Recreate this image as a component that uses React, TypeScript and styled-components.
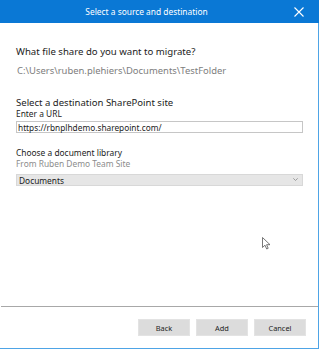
import React from "react";
import styled, { createGlobalStyle } from "styled-components";

const Global = createGlobalStyle`
  html, body { margin: 0; padding: 0; background: #ffffff; }
  body { font-family: "Noto Sans", "Open Sans", sans-serif; }
  * { box-sizing: border-box; }
`;

const Window = styled.div`
  width: 319px;
  height: 349px;
  display: flex;
  flex-direction: column;
  background: #ffffff;
  border-right: 1px solid #4ea4e6;
  border-bottom: 1px solid #4ea4e6;
`;

const TitleBar = styled.div`
  height: 23px;
  flex: none;
  background: #0a78d5;
  display: flex;
  align-items: center;
  justify-content: center;
  position: relative;
  color: #ffffff;
  font-size: 8.4px;
  margin-right: -1px;
`;

const Title = styled.span`
  margin-left: -26px;
  line-height: 12px;
`;

const CloseButton = styled.div`
  position: absolute;
  right: 15px;
  top: 7px;
  width: 10px;
  height: 10px;
  display: flex;
`;

const Content = styled.div`
  flex: 1;
  display: flex;
  flex-direction: column;
  padding: 0 15px 0 16px;
`;

const Heading = styled.div<{ $top: number; $lh: number; $size: number }>`
  margin-top: ${(p) => p.$top}px;
  line-height: ${(p) => p.$lh}px;
  font-size: ${(p) => p.$size}px;
  color: #1c1c1c;
  white-space: nowrap;
`;

const PathText = styled.div`
  margin-top: 3px;
  line-height: 16px;
  font-size: 9.45px;
  color: #7d7d7d;
  padding-left: 1px;
  white-space: nowrap;
`;

const Label = styled.div<{ $muted?: boolean }>`
  line-height: 10px;
  font-size: 8.4px;
  color: ${(p) => (p.$muted ? "#8c8c8c" : "#1c1c1c")};
  white-space: nowrap;
`;

const Input = styled.div`
  margin-top: 2px;
  height: 12px;
  border: 1px solid #c6c6c6;
  display: flex;
  align-items: center;
  padding-left: 1px;
  font-size: 8.3px;
  color: #1c1c1c;
  white-space: nowrap;
`;

const Select = styled.div`
  margin-top: 5px;
  height: 12px;
  background: #e6e6e6;
  border: 1px solid #d8d8d8;
  display: flex;
  align-items: center;
  justify-content: space-between;
  padding: 0 4px 0 2px;
  font-size: 8.35px;
  color: #1c1c1c;
`;

const Chevron = styled.svg`
  width: 5px;
  height: 3px;
  margin-top: -1px;
`;

const Spacer = styled.div`
  flex: 1;
  position: relative;
`;

const Cursor = styled.svg`
  position: absolute;
  left: 246px;
  top: 51px;
  width: 9px;
  height: 13px;
`;

const Separator = styled.div`
  height: 1px;
  margin-left: 1px;
  background: #a8a8a8;
  flex: none;
`;

const Footer = styled.div`
  flex: none;
  height: 41px;
  display: flex;
  justify-content: flex-end;
  align-items: flex-start;
  gap: 6px;
  padding: 12px 12px 0 0;
`;

const Button = styled.div`
  width: 52px;
  height: 17px;
  background: #dcdcdc;
  border: 1px solid #e3e3e3;
  display: flex;
  align-items: center;
  justify-content: center;
  font-size: 7.4px;
  color: #1c1c1c;
`;

export default function App() {
  return (
    <>
      <Global />
      <Window>
        <TitleBar>
          <Title>Select a source and destination</Title>
          <CloseButton>
            <svg width="10" height="10" viewBox="0 0 10 10">
              <path d="M0.5 0.5 L9.5 9.5 M9.5 0.5 L0.5 9.5" stroke="#ffffff" strokeWidth="1.1" />
            </svg>
          </CloseButton>
        </TitleBar>
        <Content>
          <Heading $top={21} $lh={16} $size={9.6}>What file share do you want to migrate?</Heading>
          <PathText>C:\Users\ruben.plehiers\Documents\TestFolder</PathText>
          <Heading $top={18} $lh={12} $size={9.55}>Select a destination SharePoint site</Heading>
          <Label>Enter a URL</Label>
          <Input>https://rbnplhdemo.sharepoint.com/</Input>
          <Heading $top={14} $lh={12} $size={8.4}>Choose a document library</Heading>
          <Label $muted>From Ruben Demo Team Site</Label>
          <Select>
            <span>Documents</span>
            <Chevron viewBox="0 0 5 3">
              <path d="M0.3 0.3 L2.5 2.5 L4.7 0.3" stroke="#8a8a8a" strokeWidth="0.8" fill="none" />
            </Chevron>
          </Select>
          <Spacer>
            <Cursor viewBox="0 0 9 13">
              <path d="M0.5 0.5 L0.5 10.5 L3 8.2 L4.7 12 L6.2 11.3 L4.6 7.7 L8 7.7 Z" fill="#ffffff" stroke="#555" strokeWidth="0.8" strokeLinejoin="round" />
            </Cursor>
          </Spacer>
        </Content>
        <Separator />
        <Footer>
          <Button>Back</Button>
          <Button>Add</Button>
          <Button>Cancel</Button>
        </Footer>
      </Window>
    </>
  );
}
